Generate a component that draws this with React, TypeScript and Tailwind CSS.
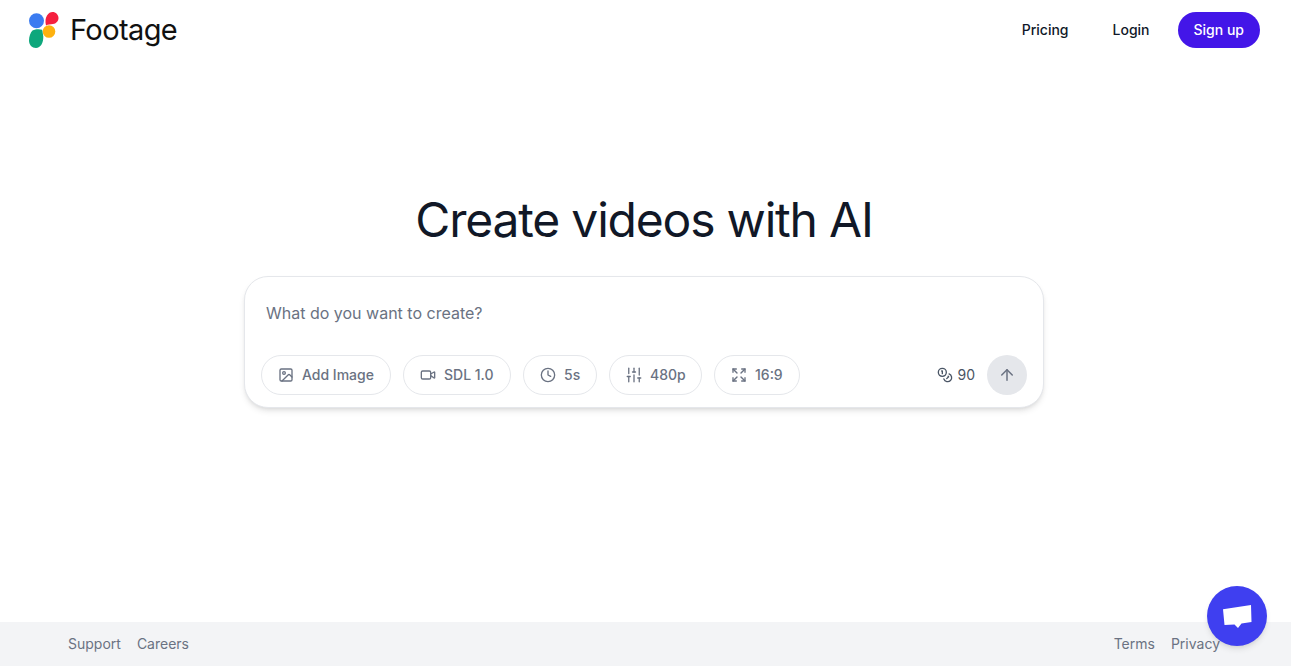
import { ArrowUp, Clock, Image, Expand, SlidersVertical, Video, Coins } from 'lucide-react';

function Logo() {
  return (
    <svg width="30" height="36" viewBox="0 0 30 36" className="shrink-0">
      <circle cx="7.500" cy="8.700" r="7.500" fill="#3b7bf0" />
      <path d="M17 13.500C16 9 16.500 6 18 3.500C19.500 1 21.500 0 23.500 0C26.800 0 29.500 2.700 29.500 6C29.500 9.300 27 11.700 24 12C21.500 12.200 19 12.500 17 13.500Z" fill="#f5203f" />
      <circle cx="20" cy="19.500" r="6.300" fill="#fdb10f" />
      <path d="M3.500 18.500C6.500 17 10.500 16.800 13.200 17.800C13.500 20 14 22 14.300 24.500C14.500 31 11.500 36 7 36C3 36 0 33 0 28.500C0 24.500 1.500 20.500 3.500 18.500Z" fill="#0ea77c" />
    </svg>
  );
}

function Pill({ icon, label, className }: { icon: React.ReactNode; label: string; className: string }) {
  return (
    <button className={`flex h-10 items-center gap-2 rounded-full border border-gray-200 text-sm font-medium text-gray-500 ${className}`}>
      {icon}
      {label}
    </button>
  );
}

export default function App() {
  return (
    <div className="relative flex min-h-screen flex-col bg-white font-['Inter',sans-serif]">
      {/* Header */}
      <header className="flex h-[60px] items-center justify-between pl-[29px] pr-[31px]">
        <div className="flex items-center gap-[12px]">
          <Logo />
          <span className="-ml-px text-[29px] font-normal tracking-[-0.6px] text-[#111]">Footage</span>
        </div>
        <nav className="flex items-center text-sm font-medium text-gray-900">
          <a className="mr-11">Pricing</a>
          <a className="mr-7">Login</a>
          <a className="flex h-9 items-center rounded-full bg-[#4316e8] px-4 text-white">Sign up</a>
        </nav>
      </header>

      {/* Prompt */}
      <main className="flex flex-1 flex-col items-center pr-[3px] pt-[136px]">
        <h1 className="mb-8 text-5xl font-normal leading-[48px] tracking-tight text-[#111827]">Create videos with AI</h1>
        <div className="w-[800px] rounded-3xl border border-gray-200 bg-white shadow-md">
          <div className="h-[78px] px-[21px] pt-6 text-base leading-6 text-gray-500">What do you want to create?</div>
          <div className="flex items-center justify-between pb-3 pl-4 pr-4">
            <div className="flex items-center gap-3">
              <Pill icon={<Image size={16} />} label="Add Image" className="w-[130px] pl-4" />
              <Pill icon={<Video size={16} />} label="SDL 1.0" className="w-[108px] pl-4" />
              <Pill icon={<Clock size={16} />} label="5s" className="w-[74px] pl-4" />
              <Pill icon={<SlidersVertical size={18} strokeWidth={1.75} className="-mx-px" />} label="480p" className="w-[93px] pl-4" />
              <Pill icon={<Expand size={16} />} label="16:9" className="w-[86px] pl-4" />
            </div>
            <div className="flex items-center gap-3">
              <span className="flex items-center gap-1 text-sm text-gray-600">
                <Coins size={16} />
                90
              </span>
              <button className="flex h-10 w-10 items-center justify-center rounded-full bg-gray-200 text-gray-500">
                <ArrowUp size={18} />
              </button>
            </div>
          </div>
        </div>
      </main>

      {/* Footer */}
      <footer className="flex h-11 items-center justify-between bg-gray-100 pl-[68px] pr-[71px] text-sm text-gray-500">
        <div className="flex gap-4">
          <a>Support</a>
          <a>Careers</a>
        </div>
        <div className="flex gap-4">
          <a>Terms</a>
          <a>Privacy</a>
        </div>
      </footer>

      {/* Chat bubble */}
      <button className="absolute bottom-5 right-6 flex h-[60px] w-[60px] items-center justify-center rounded-full bg-[#3f3ff0] shadow-md">
        <svg width="29" height="23" viewBox="0 0 29 23">
          <path d="M0 4.300L28 0L28.500 17L18.500 18.500L15 23L11.500 19.500L1.500 20Z" fill="#fff" />
        </svg>
      </button>
    </div>
  );
}
